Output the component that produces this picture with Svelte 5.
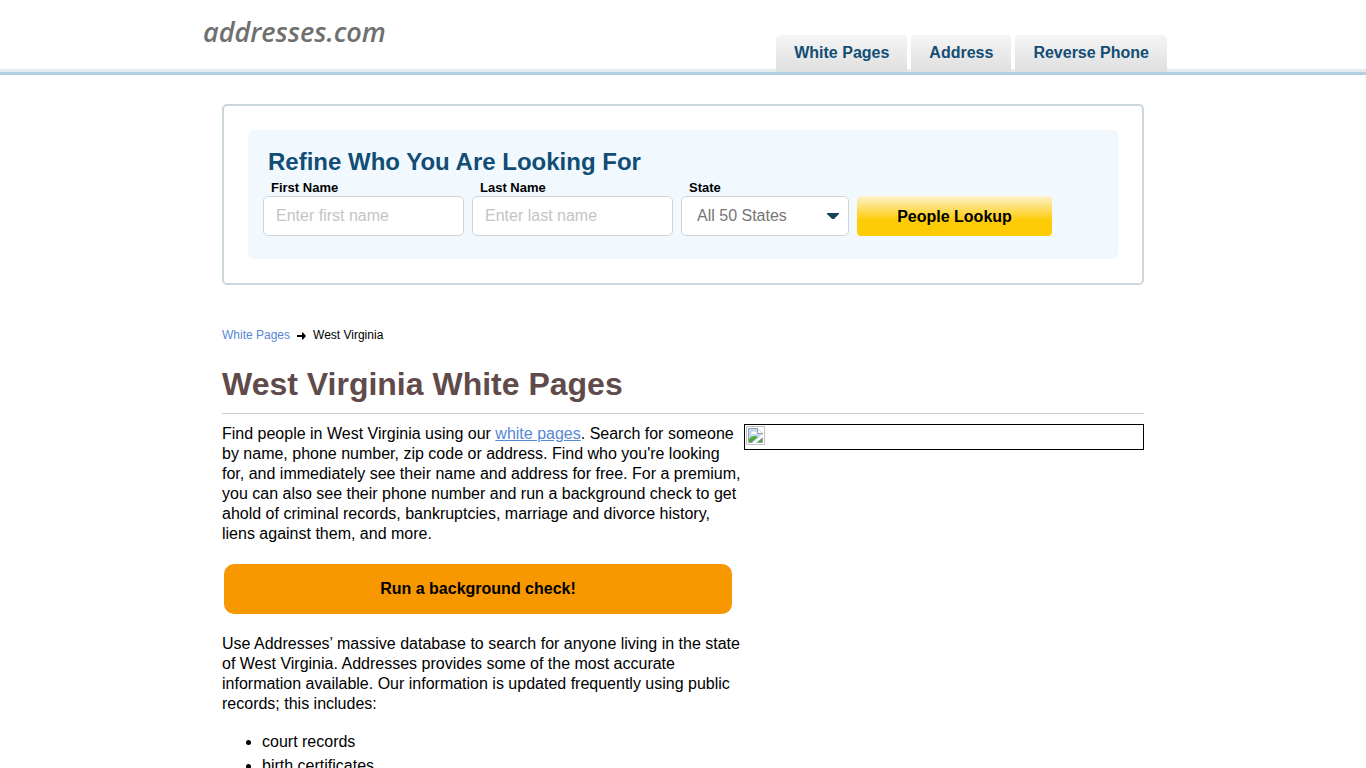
<script lang="ts">
	const tabs = ['White Pages', 'Address', 'Reverse Phone'];
	const records = ['court records', 'birth certificates'];

	let firstName = $state('');
	let lastName = $state('');
	let region = $state('All 50 States');

	function handleSubmit(event: SubmitEvent) {
		event.preventDefault();
	}
</script>

<header>
	<div class="header-inner">
		<a class="logo" href="/">addresses.com</a>
		<nav>
			{#each tabs as tab}
				<a class="tab" href="#top">{tab}</a>
			{/each}
		</nav>
	</div>
</header>

<main>
	<section class="search-box">
		<form onsubmit={handleSubmit}>
			<h2>Refine Who You Are Looking For</h2>
			<div class="fields">
				<div class="field">
					<label for="first-name">First Name</label>
					<input id="first-name" type="text" placeholder="Enter first name" bind:value={firstName} />
				</div>
				<div class="field">
					<label for="last-name">Last Name</label>
					<input id="last-name" type="text" placeholder="Enter last name" bind:value={lastName} />
				</div>
				<div class="field state">
					<label for="state">State</label>
					<div class="select-wrap">
						<select id="state" bind:value={region}>
							<option>All 50 States</option>
							<option>West Virginia</option>
						</select>
						<svg class="caret" viewBox="0 0 12 6" width="12" height="6" aria-hidden="true">
							<path d="M0 0h12v1L7.500 5.500Q6 6.500 4.500 5.500L0 1z" fill="#144258" />
						</svg>
					</div>
				</div>
				<button class="lookup" type="submit">People Lookup</button>
			</div>
		</form>
	</section>

	<div class="breadcrumb">
		<a href="#top">White Pages</a>
		<svg viewBox="0 0 9 8" width="9" height="8" aria-hidden="true">
			<path d="M0 3h5V0.500h1L9 4 6 7.500H5V5H0z" fill="#000" />
		</svg>
		<span>West Virginia</span>
	</div>

	<h1>West Virginia White Pages</h1>

	<div class="content">
		<div class="copy">
			<p>
				Find people in West Virginia using our <a href="#top">white pages</a>. Search for someone by
				name, phone number, zip code or address. Find who you're looking for, and immediately see
				their name and address for free. For a premium, you can also see their phone number and run a
				background check to get ahold of criminal records, bankruptcies, marriage and divorce
				history, liens against them, and more.
			</p>
			<button class="check" type="button">Run a background check!</button>
			<p>
				Use Addresses’ massive database to search for anyone living in the state of West Virginia.
				Addresses provides some of the most accurate information available. Our information is
				updated frequently using public records; this includes:
			</p>
			<ul>
				{#each records as record}
					<li>{record}</li>
				{/each}
			</ul>
		</div>

		<div class="picture">
			<svg viewBox="0 0 20 20" width="20" height="20" aria-hidden="true">
				<path d="M0.500 0.500h18v18h-18z" fill="#fff" stroke="#c0c0c0" />
				<path d="M2.500 2.500h9l5 5v9h-14z" fill="#c3d7f5" stroke="#9a9da2" />
				<path d="M5 8q0-2 2-2 1-1.500 2.500 0 1.500 0 1.500 2z" fill="#fff" />
				<path d="M3 16v-3q4-5 9-2l-6 5z" fill="#4fa83d" />
				<path d="M11 16l5-4v4z" fill="#4fa83d" />
				<path d="M11.500 2.500v5h5" fill="#fff" stroke="#9a9da2" />
				<path d="M6 17l11-9v3l-7 6z" fill="#fff" />
			</svg>
		</div>
	</div>
</main>

<style>
	:global(body) {
		margin: 0;
		background: #fff;
		color: #000;
		font-family: 'Liberation Sans', Arial, sans-serif;
		font-size: 16px;
		line-height: 20px;
	}

	header {
		border-bottom: 3px solid #b2d0e3;
		box-shadow: inset 0 -3px #e2ebed;
	}

	.header-inner {
		display: flex;
		justify-content: space-between;
		align-items: flex-end;
		max-width: 968px;
		height: 72px;
		margin: 0 auto;
	}

	.logo {
		align-self: flex-start;
		padding: 17px 0 0 4px;
		color: #6f706e;
		font-family: 'Open Sans', sans-serif;
		font-size: 27px;
		font-style: italic;
		font-weight: 600;
		line-height: 30px;
		text-decoration: none;
	}

	nav {
		display: flex;
		gap: 4px;
	}

	.tab {
		padding: 7px 18px 9px;
		border-radius: 4px 4px 0 0;
		background: linear-gradient(#f5f5f5, #dfdfdf);
		color: #124d75;
		font-weight: bold;
		line-height: 21px;
		text-decoration: none;
	}

	main {
		max-width: 922px;
		margin: 29px auto 0;
	}

	.search-box {
		padding: 24px;
		border: 2px solid #ccd6dd;
		border-radius: 5px;
	}

	form {
		padding: 18px 15px 23px;
		border-radius: 5px;
		background: #f1f9ff;
	}

	h2 {
		margin: 0 0 4px 5px;
		color: #124d75;
		font-size: 24px;
		line-height: 28px;
	}

	.fields {
		display: flex;
		align-items: flex-end;
		gap: 8px;
	}

	.field {
		display: flex;
		flex-direction: column;
		width: 201px;
	}

	.state {
		width: 168px;
	}

	label {
		padding-left: 8px;
		font-size: 13px;
		font-weight: bold;
		line-height: 16px;
	}

	input,
	select {
		box-sizing: border-box;
		width: 100%;
		height: 40px;
		padding: 0 12px;
		border: 1px solid #ced4da;
		border-radius: 5px;
		background: #fff;
		color: #757575;
		font: inherit;
	}

	input::placeholder {
		color: #c4c4c4;
	}

	select {
		padding: 0 15px;
		appearance: none;
	}

	.select-wrap {
		position: relative;
	}

	.caret {
		position: absolute;
		top: 17px;
		right: 10px;
		pointer-events: none;
	}

	.lookup {
		width: 195px;
		height: 40px;
		padding: 1px 0 0;
		border: 0;
		border-radius: 4px;
		background: linear-gradient(#fdf3d0, #fecb07 60%);
		color: #000;
		font: inherit;
		font-weight: bold;
	}

	.breadcrumb {
		display: flex;
		align-items: center;
		gap: 7px;
		margin-top: 42px;
		font-size: 12px;
		line-height: 16px;
	}

	.breadcrumb svg {
		margin-top: 2px;
	}

	main a {
		color: #5887d3;
	}

	.breadcrumb a {
		text-decoration: none;
	}

	h1 {
		margin: 21px 0 10px;
		padding-bottom: 9px;
		border-bottom: 1px solid #ccc;
		color: #614a4a;
		font-size: 32px;
		line-height: 40px;
	}

	.content {
		display: flex;
		align-items: flex-start;
	}

	.copy {
		flex: 1;
	}

	p {
		margin: 0 0 20px;
	}

	.check {
		display: block;
		width: 508px;
		height: 50px;
		margin: 0 2px 20px;
		border: 0;
		border-radius: 10px;
		background: #f89800;
		color: #000;
		font: inherit;
		font-weight: bold;
	}

	ul {
		margin: -4px 0 0;
		padding-left: 40px;
	}

	li {
		line-height: 24px;
	}

	.picture {
		box-sizing: border-box;
		width: 400px;
		height: 26px;
		padding: 1px;
		border: 1px solid #000;
	}

	.picture svg {
		display: block;
	}
</style>
